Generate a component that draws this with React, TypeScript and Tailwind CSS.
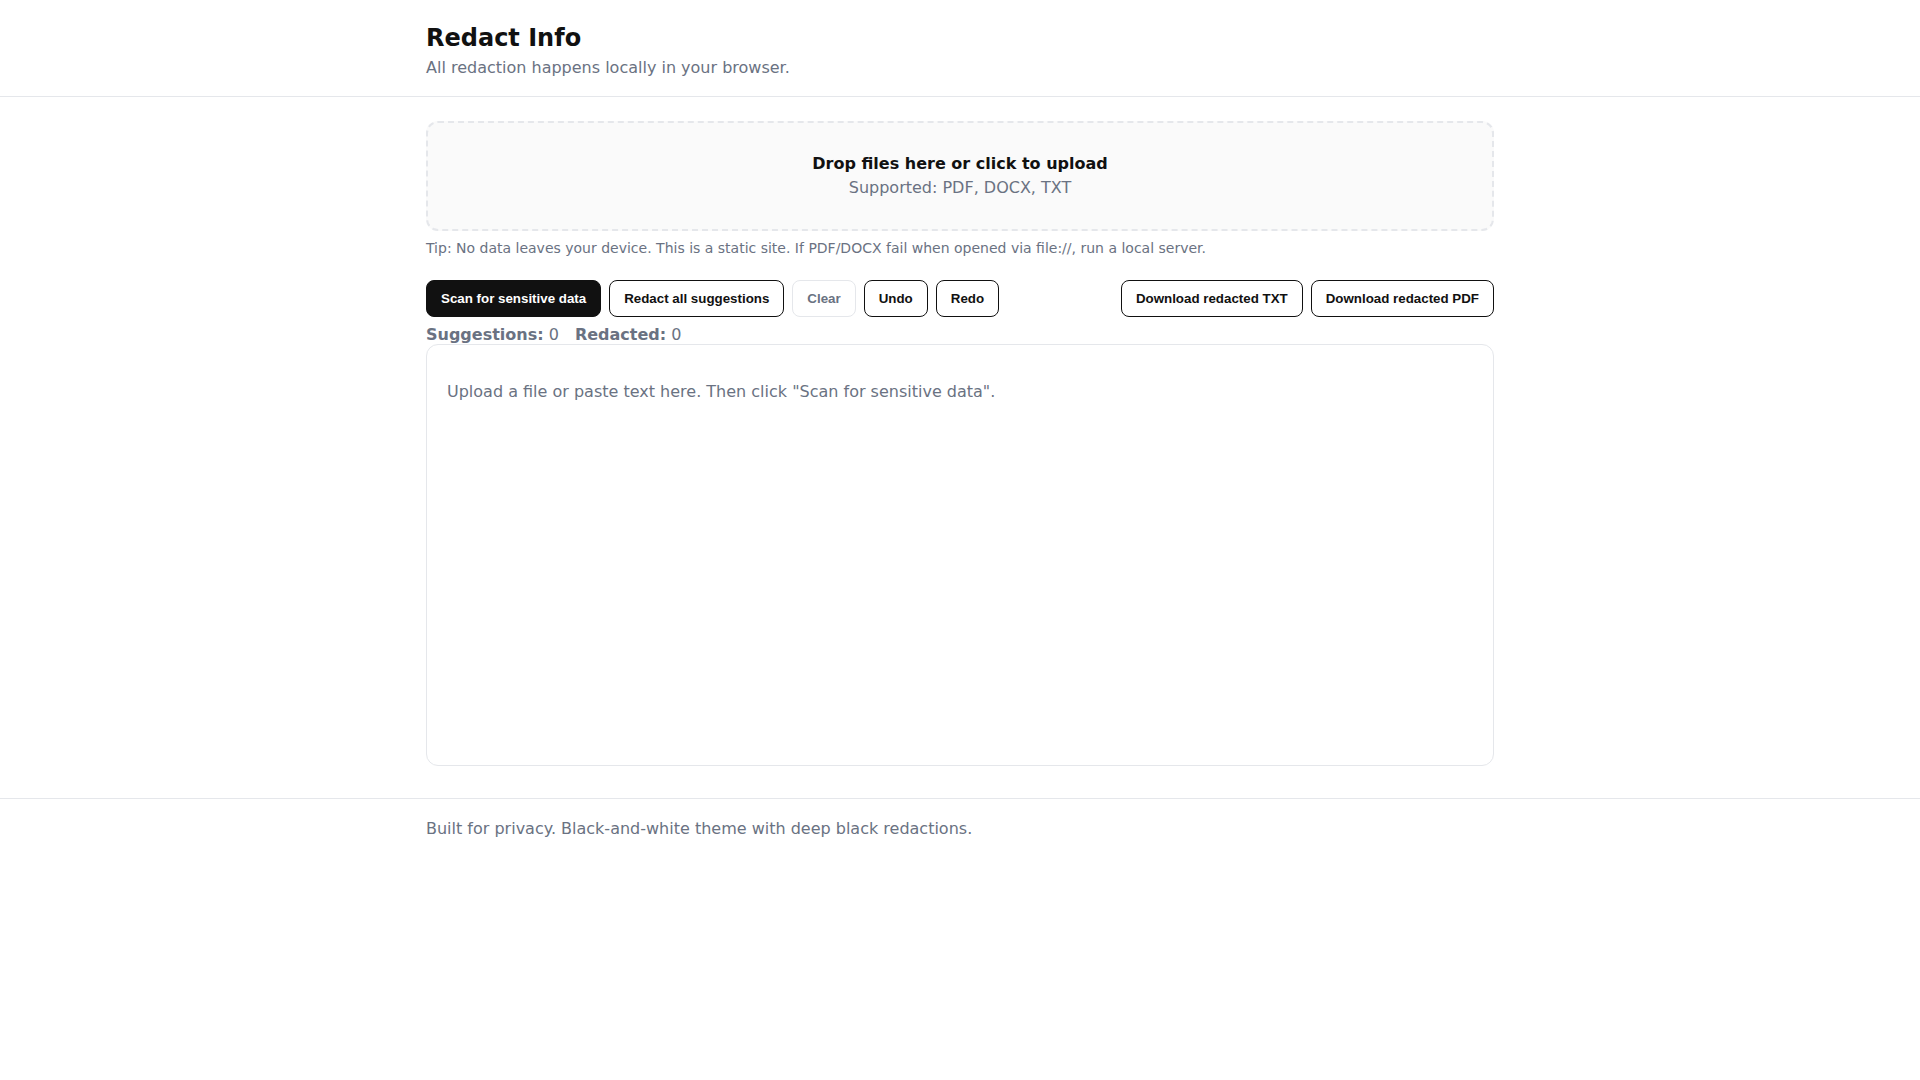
import { useState } from 'react'

const btn =
  "h-[37px] px-[14px] rounded-lg border text-[13.333px] font-bold font-['Liberation_Sans',Arial,sans-serif] leading-[15px]"

export default function App() {
  const [text, setText] = useState('')
  const suggestions = 0
  const redacted = 0

  return (
    <div className="min-h-screen bg-white text-[#111] font-['DejaVu_Sans',sans-serif]">
      <header className="border-b border-gray-200">
        <div className="max-w-[1100px] mx-auto px-4 pt-[22px] pb-4">
          <h1 className="text-2xl leading-8 font-bold">Redact Info</h1>
          <p className="mt-[2px] text-base leading-6 text-gray-500">All redaction happens locally in your browser.</p>
        </div>
      </header>

      <main className="max-w-[1100px] mx-auto px-4 pt-6 pb-8">
        {/* Upload zone */}
        <label className="block h-[110px] rounded-xl border-2 border-dashed border-gray-200 bg-[#fafafa] text-center pt-[29px] cursor-pointer">
          <div className="font-bold text-base leading-6">Drop files here or click to upload</div>
          <div className="text-base leading-6 text-gray-500">Supported: PDF, DOCX, TXT</div>
          <input type="file" className="hidden" accept=".pdf,.docx,.txt" />
        </label>
        <p className="mt-[7px] text-sm leading-5 text-gray-500">
          Tip: No data leaves your device. This is a static site. If PDF/DOCX fail when opened via file://, run a local server.
        </p>

        {/* Actions */}
        <div className="mt-[22px] flex items-center gap-2">
          <button className={`${btn} bg-[#111] border-[#111] text-white`}>Scan for sensitive data</button>
          <button className={`${btn} bg-white border-[#111]`}>Redact all suggestions</button>
          <button className={`${btn} bg-white border-gray-200 text-gray-500`} disabled>Clear</button>
          <button className={`${btn} bg-white border-[#111]`}>Undo</button>
          <button className={`${btn} bg-white border-[#111]`}>Redo</button>
          <div className="ml-auto flex gap-2">
            <button className={`${btn} bg-white border-[#111]`}>Download redacted TXT</button>
            <button className={`${btn} bg-white border-[#111]`}>Download redacted PDF</button>
          </div>
        </div>

        <div className="mt-2 text-base leading-[19px] text-gray-500">
          <span className="font-bold">Suggestions:</span> {suggestions}
          <span className="ml-4 font-bold">Redacted:</span> {redacted}
        </div>

        <textarea
          value={text}
          onChange={e => setText(e.target.value)}
          placeholder='Upload a file or paste text here. Then click "Scan for sensitive data".'
          className="block w-full h-[422px] resize-none rounded-xl border border-gray-200 px-5 pt-[35px] text-base leading-6 placeholder:text-gray-500 focus:outline-none"
        />
      </main>

      <footer className="border-t border-gray-200">
        <div className="max-w-[1100px] mx-auto px-4 pt-[18px] pb-6 text-base leading-6 text-gray-500">
          Built for privacy. Black-and-white theme with deep black redactions.
        </div>
      </footer>
    </div>
  )
}
